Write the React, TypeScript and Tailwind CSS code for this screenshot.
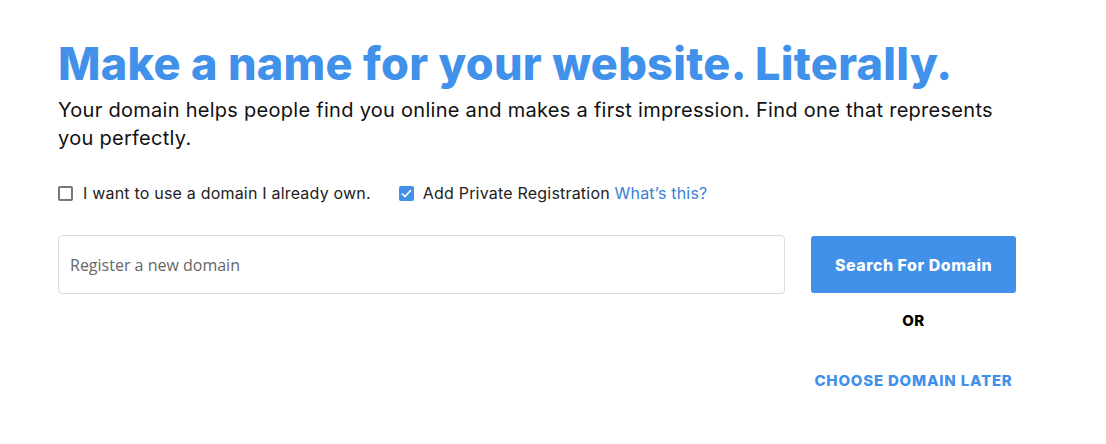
import { useState } from 'react';

export default function App() {
  const [ownDomain, setOwnDomain] = useState(false);
  const [privateReg, setPrivateReg] = useState(true);

  return (
    <div className="min-h-[444px] bg-white font-['Inter',sans-serif] text-black">
      <div className="pl-[58px] pt-[38px] w-[1016px]">
        {/* heading */}
        <h1 className="text-[45px] leading-[52px] font-extrabold tracking-[0.3px] text-[#4190e9]">
          Make a name for your website. Literally.
        </h1>
        <p className="mt-[6px] text-[20px] leading-[28px] tracking-[0.28px] text-[#111]">
          Your domain helps people find you online and makes a first impression. Find one that represents you perfectly.
        </p>

        {/* options */}
        <div className="mt-[29px] flex items-center gap-[28px] text-[16px] tracking-[0.2px] text-[#222]">
          <label className="flex items-center gap-[10px] cursor-pointer">
            <span
              onClick={() => setOwnDomain(!ownDomain)}
              className={`flex h-[15px] w-[15px] items-center justify-center rounded-[2px] border-2 ${
                ownDomain ? 'border-[#4190e9] bg-[#4190e9]' : 'border-[#777] bg-white'
              }`}
            >
              {ownDomain && <Check />}
            </span>
            I want to use a domain I already own.
          </label>
          <label className="flex items-center gap-[9px] cursor-pointer">
            <span
              onClick={() => setPrivateReg(!privateReg)}
              className={`flex h-[15px] w-[15px] items-center justify-center rounded-[2px] ${
                privateReg ? 'bg-[#4190e9]' : 'border-2 border-[#777] bg-white'
              }`}
            >
              {privateReg && <Check />}
            </span>
            <span>
              Add Private Registration <a href="#" className="text-[#3b7fd4]">What’s this?</a>
            </span>
          </label>
        </div>

        {/* search */}
        <div className="mt-[30px] flex items-start gap-[26px]">
          <input
            type="text"
            placeholder="Register a new domain"
            className="h-[59px] w-[727px] rounded-[4px] border border-[#dcdcdc] px-[11px] font-['Open_Sans',sans-serif] text-[16px] text-[#333] placeholder:text-[#666] outline-none"
          />
          <div className="flex w-[205px] flex-col items-center">
            <button className="mt-[1px] h-[57px] w-full rounded-[3px] bg-[#4190e9] text-[16px] font-extrabold tracking-[0.5px] text-white">
              Search For Domain
            </button>
            <span className="mt-[17px] text-[15px] font-extrabold tracking-[0.5px] text-black">OR</span>
            <a href="#" className="mt-[37px] text-[15px] font-extrabold tracking-[0.8px] text-[#4190e9]">
              CHOOSE DOMAIN LATER
            </a>
          </div>
        </div>
      </div>
    </div>
  );
}

function Check() {
  return (
    <svg width="11" height="9" viewBox="0 0 11 9" fill="none">
      <path d="M1 4.5L4 7.5L10 1" stroke="white" strokeWidth="1.6" />
    </svg>
  );
}
